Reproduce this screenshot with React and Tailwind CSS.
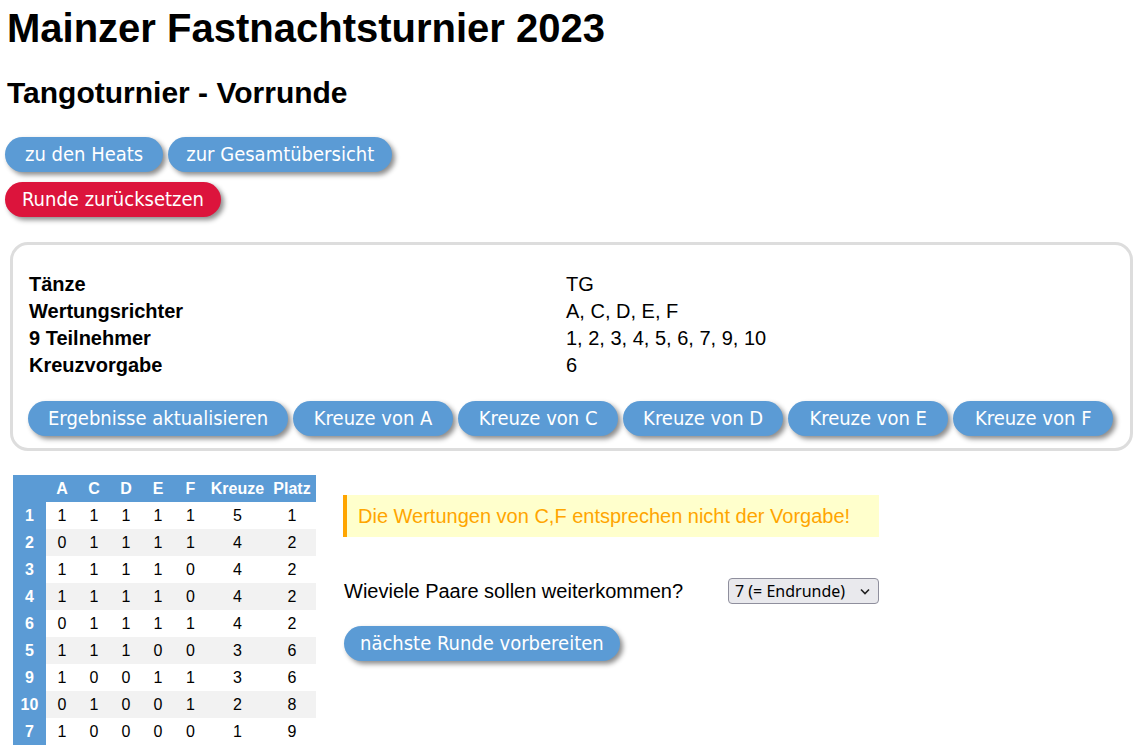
import React from "react";

const btnFont = { fontFamily: '"DejaVu Sans Condensed", "DejaVu Sans", sans-serif' };

function Btn({ children, red, pad = "px-[20px]", extra = "" }) {
  return (
    <button
      style={btnFont}
      className={
        "h-[35px] rounded-full text-white text-[20px] leading-[35px] whitespace-nowrap shadow-[3px_3px_5px_rgba(0,0,0,0.45)] " +
        (red ? "bg-[#dc143c] " : "bg-[#5b9bd5] ") +
        pad +
        " " +
        extra
      }
    >
      {children}
    </button>
  );
}

const info = [
  ["Tänze", "TG"],
  ["Wertungsrichter", "A, C, D, E, F"],
  ["9 Teilnehmer", "1, 2, 3, 4, 5, 6, 7, 9, 10"],
  ["Kreuzvorgabe", "6"],
];

const judges = ["A", "C", "D", "E", "F"];

const rows = [
  ["1", [1, 1, 1, 1, 1], 5, 1],
  ["2", [0, 1, 1, 1, 1], 4, 2],
  ["3", [1, 1, 1, 1, 0], 4, 2],
  ["4", [1, 1, 1, 1, 0], 4, 2],
  ["6", [0, 1, 1, 1, 1], 4, 2],
  ["5", [1, 1, 1, 0, 0], 3, 6],
  ["9", [1, 0, 0, 1, 1], 3, 6],
  ["10", [0, 1, 0, 0, 1], 2, 8],
  ["7", [1, 0, 0, 0, 0], 1, 9],
];

export default function App() {
  return (
    <div
      className="min-h-screen bg-white text-black px-[5px] text-[20px]"
      style={{ fontFamily: '"Liberation Sans", Arial, sans-serif' }}
    >
      <h1 className="text-[40px] font-bold leading-[46px] pt-[5px] pl-[2px]">
        Mainzer Fastnachtsturnier 2023
      </h1>
      <h2 className="text-[30px] font-bold leading-[34px] mt-[25px] pl-[2px]">
        Tangoturnier - Vorrunde
      </h2>

      <div className="flex gap-[5px] mt-[27px]">
        <Btn>zu den Heats</Btn>
        <Btn pad="px-[18px]">zur Gesamtübersicht</Btn>
      </div>
      <div className="flex mt-[10px]">
        <Btn red pad="px-[17px]">Runde zurücksetzen</Btn>
      </div>

      <div className="ml-[5px] mt-[25px] border-[3px] border-[#dddddd] rounded-[18px] pl-[16px] pr-[14px] pt-[26px] pb-[12px]">
        <div className="grid grid-cols-[537px_1fr]">
          {info.map(([k, v]) => (
            <React.Fragment key={k}>
              <div className="font-bold leading-[27px]">{k}</div>
              <div className="leading-[27px]">{v}</div>
            </React.Fragment>
          ))}
        </div>
        <div className="flex gap-[5px] mt-[22px] -ml-[1px]">
          <Btn>Ergebnisse aktualisieren</Btn>
          {judges.map((j) => (
            <Btn key={j} extra="min-w-[160px]">Kreuze von {j}</Btn>
          ))}
        </div>
      </div>

      <div className="flex items-start mt-[24px] pl-[8px]">
        <table className="table-fixed border-collapse text-[16px] w-[303px]">
          <colgroup>
            <col className="w-[33px]" />
            <col className="w-[32px]" />
            <col className="w-[32px]" />
            <col className="w-[32px]" />
            <col className="w-[32px]" />
            <col className="w-[33px]" />
            <col className="w-[61px]" />
            <col className="w-[48px]" />
          </colgroup>
          <thead>
            <tr className="h-[27px] bg-[#5b9bd5] text-white font-bold">
              <th></th>
              {judges.map((j) => (
                <th key={j} className="text-center font-bold p-0">{j}</th>
              ))}
              <th className="text-center font-bold p-0">Kreuze</th>
              <th className="text-center font-bold p-0">Platz</th>
            </tr>
          </thead>
          <tbody>
            {rows.map(([nr, marks, sum, place], i) => (
              <tr key={nr} className={"h-[27px] " + (i % 2 === 1 ? "bg-[#f2f2f2]" : "bg-white")}>
                <td className="bg-[#5b9bd5] text-white font-bold text-center p-0">{nr}</td>
                {marks.map((m, k) => (
                  <td key={k} className="text-center p-0">{m}</td>
                ))}
                <td className="text-center p-0">{sum}</td>
                <td className="text-center p-0">{place}</td>
              </tr>
            ))}
          </tbody>
        </table>

        <div className="ml-[27px] pt-[20px]">
          <div className="w-[536px] h-[42px] bg-[#ffffcc] border-l-[4px] border-[#ffa500] text-[#ffa500] pl-[11px] flex items-center">
            Die Wertungen von C,F entsprechen nicht der Vorgabe!
          </div>
          <div className="flex items-center mt-[41px] h-[26px]">
            <span className="w-[385px] pl-[1px]">Wieviele Paare sollen weiterkommen?</span>
            <div
              className="h-[26px] w-[151px] bg-[#e9e9ed] border border-[#8f8f9d] rounded-[4px] flex items-center justify-between pl-[6px] pr-[8px] text-[16px]"
              style={{ fontFamily: '"Noto Sans", "Open Sans", sans-serif' }}
            >
              <span>7 (= Endrunde)</span>
              <svg width="10" height="7" viewBox="0 0 10 7" fill="none">
                <path d="M1 1.5 L5 5.5 L9 1.5" stroke="#222" strokeWidth="1.6" />
              </svg>
            </div>
          </div>
          <div className="flex mt-[22px] pl-[1px]">
            <Btn pad="px-[16px]">nächste Runde vorbereiten</Btn>
          </div>
        </div>
      </div>
    </div>
  );
}
